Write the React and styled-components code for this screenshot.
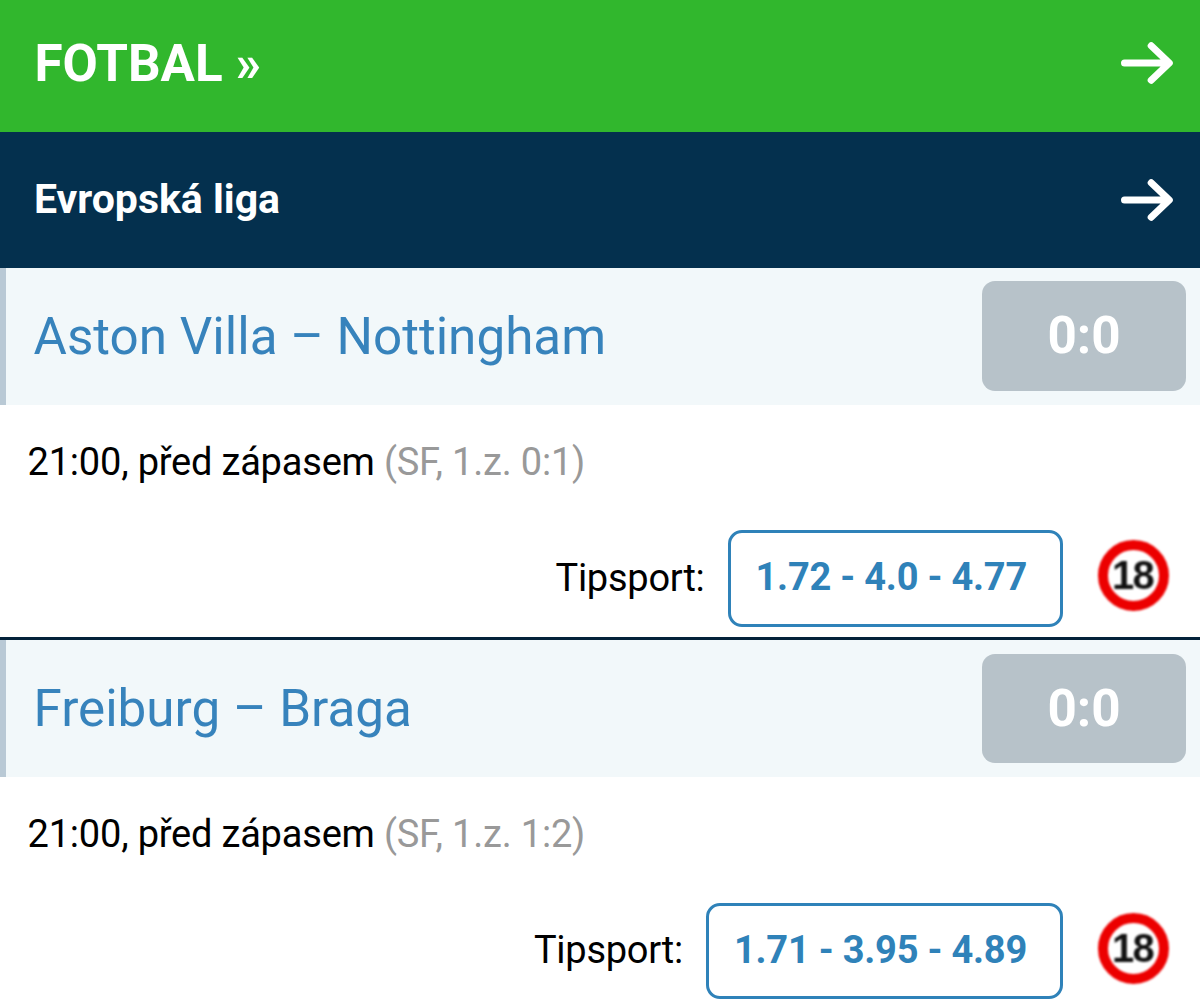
import React from "react";
import styled, { createGlobalStyle } from "styled-components";

const GlobalStyle = createGlobalStyle`
  * { box-sizing: border-box; }
  body {
    margin: 0;
    background: #fff;
    color: #000;
    font-family: Roboto, "Liberation Sans", sans-serif;
    overflow: hidden;
  }
`;

const Page = styled.main`
  width: 1200px;
  height: 1003px;
  overflow: hidden;
`;

const Bar = styled.header`
  display: flex;
  align-items: center;
  justify-content: space-between;
  padding: 0 26px ${(p) => p.$bottom}px 34px;
  color: #fff;
`;

const SportBar = styled(Bar)`
  height: 132px;
  background: #31b72d;
`;

const LeagueBar = styled(Bar)`
  height: 136px;
  background: #04304e;
`;

const SportTitle = styled.h1`
  margin: 0;
  padding: 1px 0 0 0.5px;
  font-size: 51.2px;
  font-weight: 700;
  line-height: 60px;
`;

const LeagueTitle = styled.h2`
  margin: 0;
  font-size: 41px;
  font-weight: 700;
  line-height: 50px;
  padding-bottom: 1px;
`;

const Arrow = styled.svg`
  display: block;
  width: 54px;
  height: 44px;
`;

const Match = styled.article`
  border-bottom: 3px solid #04223a;
`;

const Teams = styled.div`
  display: flex;
  align-items: center;
  justify-content: space-between;
  height: 137px;
  padding: 0 14px 0 28px;
  border-left: 6px solid #b9c9d5;
  background: #f2f8fa;
`;

const TeamNames = styled.a`
  margin-left: -0.5px;
  color: #3783bc;
  font-size: 51.2px;
  line-height: 60px;
`;

const Score = styled.div`
  width: 204px;
  height: 109.6px;
  margin-bottom: 0.9px;
  border-radius: 13px;
  background: #b7c2c9;
  color: #fff;
  font-size: 51.2px;
  font-weight: 700;
  line-height: 109px;
  text-align: center;
`;

const Details = styled.div`
  height: 232.35px;
  padding: 32px 31px 0 27.5px;
`;

const Status = styled.div`
  font-size: 38px;
  line-height: 50px;
  letter-spacing: -0.2px;
`;

const Note = styled.span`
  color: #999;
`;

const OddsRow = styled.div`
  display: flex;
  align-items: center;
  justify-content: flex-end;
  height: 96.6px;
  margin-top: 43.2px;
`;

const Bookmaker = styled.span`
  margin-right: 23.5px;
  padding-bottom: 1px;
  font-size: 38px;
  line-height: 50px;
  letter-spacing: -0.25px;
`;

const Odds = styled.a`
  height: 96.6px;
  padding: 0 33px 0 24.5px;
  border: 3px solid #2f82b9;
  border-radius: 14px;
  color: #2f82b9;
  font-size: 38px;
  font-weight: 700;
  line-height: 88.6px;
  letter-spacing: -0.22px;
`;

const AgeLimit = styled.span`
  display: flex;
  align-items: center;
  justify-content: center;
  width: 71px;
  height: 71px;
  margin: 0 0 5.4px 35px;
  padding-right: 1px;
  border: 10px solid #ec0000;
  border-radius: 50%;
  background: #fff;
  color: #111;
  font: 700 40px/51px "Liberation Sans", sans-serif;
  letter-spacing: -1.8px;
  text-indent: -1px;
  filter: blur(1px);
`;

function ArrowIcon() {
  return (
    <Arrow viewBox="0 0 54 44" fill="none" stroke="#fff" strokeWidth="7" strokeLinecap="round" strokeLinejoin="round" aria-hidden="true">
      <path d="M4.5 22H48M31.2 4.8 49.3 22 31.2 39.2" />
    </Arrow>
  );
}

const matches = [
  { teams: "Aston Villa – Nottingham", score: "0:0", note: "(SF, 1.z. 0:1)", odds: "1.72 - 4.0 - 4.77" },
  { teams: "Freiburg – Braga", score: "0:0", note: "(SF, 1.z. 1:2)", odds: "1.71 - 3.95 - 4.89" },
];

export default function App() {
  return (
    <>
      <GlobalStyle />
      <Page>
        <SportBar $bottom={6}>
          <SportTitle>FOTBAL »</SportTitle>
          <ArrowIcon />
        </SportBar>
        <LeagueBar $bottom={1}>
          <LeagueTitle>Evropská liga</LeagueTitle>
          <ArrowIcon />
        </LeagueBar>
        {matches.map((m) => (
          <Match key={m.teams}>
            <Teams>
              <TeamNames>{m.teams}</TeamNames>
              <Score>{m.score}</Score>
            </Teams>
            <Details>
              <Status>
                21:00, před zápasem <Note>{m.note}</Note>
              </Status>
              <OddsRow>
                <Bookmaker>Tipsport:</Bookmaker>
                <Odds>{m.odds}</Odds>
                <AgeLimit>18</AgeLimit>
              </OddsRow>
            </Details>
          </Match>
        ))}
      </Page>
    </>
  );
}
